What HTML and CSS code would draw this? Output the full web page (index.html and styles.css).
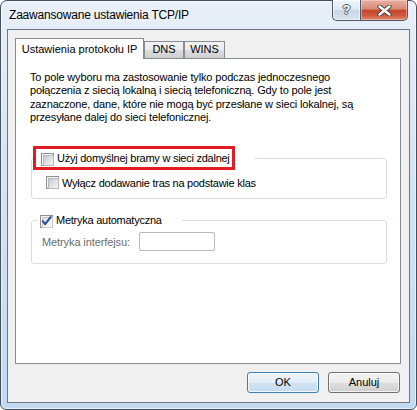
FILE: index.html
```html
<!DOCTYPE html>
<html lang="pl">
<head>
<meta charset="utf-8">
<title>Zaawansowane ustawienia TCP/IP</title>
<link rel="stylesheet" href="styles.css">
</head>
<body>
<div class="window">
  <div class="titlebar">
    <span class="title">Zaawansowane ustawienia TCP/IP</span>
    <div class="caption">
      <div class="cbtn help"><span class="qmark">?</span></div>
      <div class="cbtn close">
        <svg width="15" height="11" viewBox="0 0 15 11">
          <path d="M2.5 1.5 L12.5 9.5 M12.5 1.5 L2.5 9.5" stroke="#3c3c3c" stroke-width="4.2" stroke-linecap="round"/>
          <path d="M2.5 1.5 L12.5 9.5 M12.5 1.5 L2.5 9.5" stroke="#ffffff" stroke-width="2.4" stroke-linecap="round"/>
        </svg>
      </div>
    </div>
  </div>
  <div class="client">
    <div class="tabs">
      <div class="tab active">Ustawienia protokołu IP</div>
      <div class="tab dns">DNS</div>
      <div class="tab wins">WINS</div>
    </div>
    <div class="panel">
      <p class="info">To pole wyboru ma zastosowanie tylko podczas jednoczesnego<br>połączenia z siecią lokalną i siecią telefoniczną. Gdy to pole jest<br>zaznaczone, dane, które nie mogą być przesłane w sieci lokalnej, są<br>przesyłane dalej do sieci telefonicznej.</p>
      <fieldset class="group g1">
        <legend class="legend1"><span class="highlight"><span class="cb"></span><span class="lbl">Użyj domyślnej bramy w sieci zdalnej</span></span></legend>
        <div class="row sub"><span class="cb"></span><span class="lbl">Wyłącz dodawanie tras na podstawie klas</span></div>
      </fieldset>
      <fieldset class="group g2">
        <legend class="legend2"><span class="cb checked"><svg class="tick" width="13" height="13" viewBox="0 0 13 13"><path d="M2.8 6.2 L5.2 9.2 L10.6 2.2" fill="none" stroke="#2d4f93" stroke-width="2.1" stroke-linejoin="round" stroke-linecap="round"/></svg></span><span class="lbl">Metryka automatyczna</span></legend>
        <div class="row metric"><span class="muted">Metryka interfejsu:</span><span class="input"></span></div>
      </fieldset>
    </div>
    <div class="buttons">
      <button class="btn default">OK</button>
      <button class="btn">Anuluj</button>
    </div>
  </div>
</div>
</body>
</html>
```
FILE: styles.css
```css
* { box-sizing: border-box; }
html, body { margin: 0; padding: 0; }
body {
  width: 417px;
  height: 410px;
  background: #ffffff;
  font-family: "Liberation Sans", Arial, sans-serif;
  font-size: 11px;
  color: #000;
}
.window {
  width: 417px;
  height: 410px;
  border: 1px solid #43505e;
  border-radius: 7px 7px 6px 6px;
  background: linear-gradient(180deg, #e8eff8 0%, #d7e5f4 35%, #c3d9f0 100%);
  box-shadow: inset 0 0 0 1px rgba(255, 255, 255, 0.55);
  display: flex;
  flex-direction: column;
}
.titlebar {
  flex: none;
  height: 28px;
  display: flex;
  align-items: flex-start;
}
.title {
  padding: 6px 0 0 8px;
  font-size: 12px;
  line-height: 16px;
  letter-spacing: -0.2px;
  text-shadow: 0 0 6px #ffffff;
}
.caption {
  margin-left: auto;
  margin-right: 8px;
  margin-top: -1px;
  display: flex;
}
.cbtn {
  height: 21px;
  border: 1px solid #4d5967;
  border-top: none;
  display: flex;
  align-items: center;
  justify-content: center;
}
.help {
  width: 28px;
  border-right: none;
  border-radius: 0 0 0 5px;
  background: linear-gradient(180deg, #eef3f9 0%, #dfe8f2 48%, #c9d7e7 52%, #d8e3ef 100%);
  box-shadow: inset 0 0 0 1px rgba(255, 255, 255, 0.6);
}
.qmark {
  color: #ffffff;
  font-weight: bold;
  font-size: 13px;
  line-height: 13px;
  margin-top: -1px;
  text-shadow: 1px 0 0 #4a5663, -1px 0 0 #4a5663, 0 1px 0 #4a5663, 0 -1px 0 #4a5663;
}
.close {
  width: 48px;
  border-radius: 0 0 5px 0;
  background: linear-gradient(180deg, #e8b0a2 0%, #d98a75 45%, #c4472d 52%, #cf5a40 78%, #e08a6c 100%);
  box-shadow: inset 0 0 0 1px rgba(255, 220, 210, 0.45);
}
.close svg { display: block; }
.client {
  flex: 1;
  margin: 0 6px 6px;
  border: 1px solid #6b7886;
  background: #f0f0f0;
  padding: 8px 8px 9px 7px;
  display: flex;
  flex-direction: column;
}
.tabs {
  flex: none;
  height: 21px;
  margin-bottom: -1px;
  display: flex;
  align-items: flex-end;
  position: relative;
  z-index: 1;
}
.tab {
  height: 17px;
  margin-bottom: 1px;
  border: 1px solid #898c95;
  border-bottom: none;
  background: linear-gradient(180deg, #f3f3f3 0%, #ebebeb 50%, #dddddd 51%, #cfcfcf 100%);
  text-align: center;
  line-height: 14px;
  white-space: nowrap;
}
.tab.active {
  width: 129px;
  height: 21px;
  margin-bottom: 0;
  padding-top: 3px;
  background: #ffffff;
}
.tab.dns { width: 40px; }
.tab.wins { width: 41px; }
.panel {
  flex: none;
  height: 306px;
  border: 1px solid #898c95;
  background: #ffffff;
  padding: 12px 13px 0 14px;
}
.info {
  margin: 0;
  line-height: 13.33px;
  letter-spacing: -0.15px;
  white-space: nowrap;
}
.lbl { letter-spacing: -0.25px; white-space: nowrap; }
.group {
  margin: 0 0 0 1px;
  padding: 0;
  min-width: 0;
  border: 1px solid #d5dfe5;
  border-radius: 3px;
}
.g1 {
  margin-top: 22px;
  padding-bottom: 9px;
}
.g2 {
  margin-top: 14px;
  padding-bottom: 12px;
}
.legend1 {
  padding: 0 20px 0 0;
  margin-left: 1px;
}
.highlight {
  display: flex;
  align-items: center;
  height: 24px;
  border: 3px solid #e31b23;
  padding: 0 2px 0 5px;
  gap: 3px;
  line-height: 13px;
}
.highlight .cb { margin-top: 2px; }
.legend2 {
  display: flex;
  align-items: center;
  height: 15px;
  padding: 0 20px 0 2px;
  margin-left: 6px;
  gap: 3px;
  line-height: 13px;
}
.legend2 .cb { margin-top: 1px; }
.row {
  display: flex;
  align-items: center;
  white-space: nowrap;
}
.sub {
  height: 13px;
  margin-top: 6px;
  padding-left: 14px;
  gap: 3px;
}
.metric {
  height: 19px;
  margin-top: 4px;
  padding-left: 10px;
}
.muted {
  width: 97px;
  color: #6d6d6d;
  letter-spacing: -0.1px;
}
.input {
  width: 76px;
  height: 19px;
  border: 1px solid #b9b9b9;
  border-radius: 2px;
  background: #ffffff;
}
.cb {
  flex: none;
  position: relative;
  width: 13px;
  height: 13px;
  border: 1px solid #8e8f8f;
  padding: 1px;
  background: #f6f6f6;
}
.cb::before {
  content: "";
  display: block;
  width: 9px;
  height: 9px;
  border: 1px solid #b4b7bb;
  background: linear-gradient(135deg, #c4c8cd 0%, #dfe1e3 50%, #f5f5f6 100%);
}
.cb.checked::before {
  border-color: #c6c8cb;
  background: linear-gradient(135deg, #dfe2e6 0%, #f1f2f3 60%, #fbfbfb 100%);
}
.tick {
  position: absolute;
  left: -1px;
  top: -1px;
}
.buttons {
  flex: none;
  margin-top: 8px;
  padding-right: 1px;
  display: flex;
  justify-content: flex-end;
  gap: 9px;
}
.btn {
  width: 72px;
  height: 21px;
  padding: 0;
  border: 1px solid #707070;
  border-radius: 3px;
  background: linear-gradient(180deg, #f2f2f2 0%, #ebebeb 50%, #dddddd 51%, #cfcfcf 100%);
  box-shadow: inset 0 0 0 1px rgba(255, 255, 255, 0.7);
  font-family: "Liberation Sans", Arial, sans-serif;
  font-size: 11px;
  line-height: 13px;
  color: #000;
}
.btn.default {
  border-color: #3c7fb1;
  background: linear-gradient(180deg, #eef5fb 0%, #e1edf7 50%, #d0e3f2 51%, #c4dcef 100%);
  box-shadow: inset 0 0 0 1px rgba(255, 255, 255, 0.75);
}
```
